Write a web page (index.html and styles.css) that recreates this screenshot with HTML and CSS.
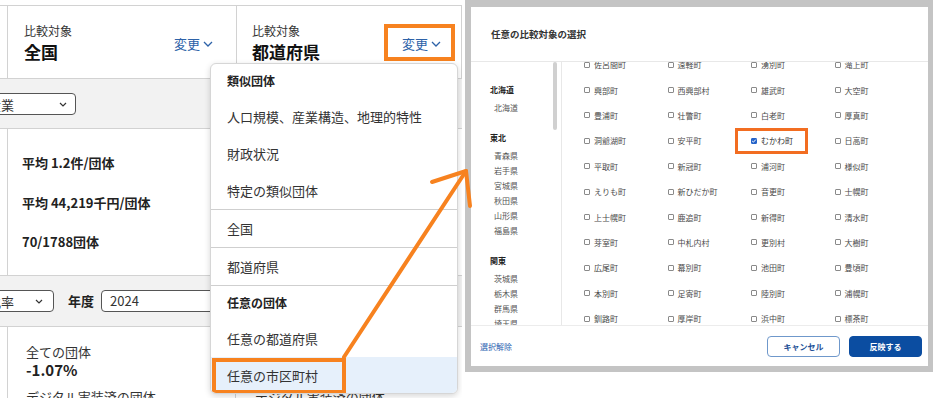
FILE: index.html
```html
<!DOCTYPE html>
<html lang="ja">
<head>
<meta charset="utf-8">
<link rel="stylesheet" href="styles.css">
</head>
<body>
<div class="canvas">
  <section class="dash">
    <div class="cards top">
      <div class="lead"></div>
      <div class="card c1">
        <div class="card-text">
          <div class="label">比較対象</div>
          <div class="value">全国</div>
        </div>
        <a class="change">変更<svg width="10" height="6" viewBox="0 0 10 6"><path d="M1 1l4 4 4-4" fill="none" stroke="#2d62a8" stroke-width="1.3"/></svg></a>
      </div>
      <div class="card c2">
        <div class="card-text">
          <div class="label">比較対象</div>
          <div class="value">都道府県</div>
        </div>
        <a class="change">変更<svg width="10" height="6" viewBox="0 0 10 6"><path d="M1 1l4 4 4-4" fill="none" stroke="#2d62a8" stroke-width="1.3"/></svg><span class="mark mark-change"></span></a>
      </div>
    </div>
    <div class="band band1">
      <div class="select s1"><span>産業</span><svg width="8" height="5" viewBox="0 0 8 5"><path d="M1 1l3 3 3-3" fill="none" stroke="#333" stroke-width="1.2"/></svg></div>
    </div>
    <div class="stats">
      <p>平均 1.2件/団体</p>
      <p>平均 44,219千円/団体</p>
      <p>70/1788団体</p>
    </div>
    <div class="band band2">
      <div class="select s2"><span>比率</span><svg width="8" height="5" viewBox="0 0 8 5"><path d="M1 1l3 3 3-3" fill="none" stroke="#333" stroke-width="1.2"/></svg></div>
      <span class="year-label">年度</span>
      <div class="input">2024</div>
    </div>
    <div class="cards bottom">
      <div class="lead"></div>
      <div class="card b1">
        <div class="blabel">全ての団体</div>
        <div class="bvalue">-1.07%</div>
        <div class="blabel next">デジタル実装済の団体</div>
      </div>
      <div class="card b2">
        <div class="blabel">デジタル実装済の団体</div>
      </div>
    </div>
    <div class="menu">
      <div class="menu-head">類似団体</div>
      <div class="menu-item">人口規模、産業構造、地理的特性</div>
      <div class="menu-item">財政状況</div>
      <div class="menu-item">特定の類似団体</div>
      <div class="menu-sep"></div>
      <div class="menu-item">全国</div>
      <div class="menu-sep"></div>
      <div class="menu-item">都道府県</div>
      <div class="menu-sep"></div>
      <div class="menu-head">任意の団体</div>
      <div class="menu-item">任意の都道府県</div>
      <div class="menu-item active">任意の市区町村<span class="mark mark-item"></span></div>
    </div>
  </section>

  <section class="modal">
    <div class="modal-head">任意の比較対象の選択</div>
    <div class="modal-body">
      <div class="side">
        <div class="thumb"></div>
        <div class="group">
          <div class="ghead">北海道</div>
          <div class="gitem">北海道</div>
        </div>
        <div class="group">
          <div class="ghead">東北</div>
          <div class="gitem">青森県</div>
          <div class="gitem">岩手県</div>
          <div class="gitem">宮城県</div>
          <div class="gitem">秋田県</div>
          <div class="gitem">山形県</div>
          <div class="gitem">福島県</div>
        </div>
        <div class="group">
          <div class="ghead">関東</div>
          <div class="gitem">茨城県</div>
          <div class="gitem">栃木県</div>
          <div class="gitem">群馬県</div>
          <div class="gitem">埼玉県</div>
        </div>
      </div>
      <div class="grid-wrap">
        <div class="grid">
          <div class="cell"><i class="cb"></i>佐呂間町</div>
          <div class="cell"><i class="cb"></i>遠軽町</div>
          <div class="cell"><i class="cb"></i>湧別町</div>
          <div class="cell"><i class="cb"></i>滝上町</div>
          <div class="cell"><i class="cb"></i>興部町</div>
          <div class="cell"><i class="cb"></i>西興部村</div>
          <div class="cell"><i class="cb"></i>雄武町</div>
          <div class="cell"><i class="cb"></i>大空町</div>
          <div class="cell"><i class="cb"></i>豊浦町</div>
          <div class="cell"><i class="cb"></i>壮瞥町</div>
          <div class="cell"><i class="cb"></i>白老町</div>
          <div class="cell"><i class="cb"></i>厚真町</div>
          <div class="cell"><i class="cb"></i>洞爺湖町</div>
          <div class="cell"><i class="cb"></i>安平町</div>
          <div class="cell picked"><i class="cb on"><svg width="6" height="6" viewBox="0 0 6 6"><path d="M1.2 3l1.2 1.2L4.8 1.6" fill="none" stroke="#fff" stroke-width="1"/></svg></i>むかわ町<span class="mark mark-cell"></span></div>
          <div class="cell"><i class="cb"></i>日高町</div>
          <div class="cell"><i class="cb"></i>平取町</div>
          <div class="cell"><i class="cb"></i>新冠町</div>
          <div class="cell"><i class="cb"></i>浦河町</div>
          <div class="cell"><i class="cb"></i>様似町</div>
          <div class="cell"><i class="cb"></i>えりも町</div>
          <div class="cell"><i class="cb"></i>新ひだか町</div>
          <div class="cell"><i class="cb"></i>音更町</div>
          <div class="cell"><i class="cb"></i>士幌町</div>
          <div class="cell"><i class="cb"></i>上士幌町</div>
          <div class="cell"><i class="cb"></i>鹿追町</div>
          <div class="cell"><i class="cb"></i>新得町</div>
          <div class="cell"><i class="cb"></i>清水町</div>
          <div class="cell"><i class="cb"></i>芽室町</div>
          <div class="cell"><i class="cb"></i>中札内村</div>
          <div class="cell"><i class="cb"></i>更別村</div>
          <div class="cell"><i class="cb"></i>大樹町</div>
          <div class="cell"><i class="cb"></i>広尾町</div>
          <div class="cell"><i class="cb"></i>幕別町</div>
          <div class="cell"><i class="cb"></i>池田町</div>
          <div class="cell"><i class="cb"></i>豊頃町</div>
          <div class="cell"><i class="cb"></i>本別町</div>
          <div class="cell"><i class="cb"></i>足寄町</div>
          <div class="cell"><i class="cb"></i>陸別町</div>
          <div class="cell"><i class="cb"></i>浦幌町</div>
          <div class="cell"><i class="cb"></i>釧路町</div>
          <div class="cell"><i class="cb"></i>厚岸町</div>
          <div class="cell"><i class="cb"></i>浜中町</div>
          <div class="cell"><i class="cb"></i>標茶町</div>
        </div>
      </div>
    </div>
    <div class="modal-foot">
      <a class="clear">選択解除</a>
      <button class="btn ghost">キャンセル</button>
      <button class="btn solid">反映する</button>
    </div>
  </section>

  <svg class="arrow" width="938" height="398" viewBox="0 0 938 398">
    <g fill="none" stroke="#f7821f" stroke-width="4" stroke-linecap="round" stroke-linejoin="round">
      <path d="M344 357L466 171"/>
      <path d="M432 182L466 171L470 206"/>
    </g>
  </svg>
</div>
</body>
</html>
```

FILE: styles.css
```css
* { box-sizing: border-box; }
html, body { margin: 0; padding: 0; background: #fff; }
body {
  font-family: "Noto Sans CJK JP", "Noto Sans", sans-serif;
  color: #333;
}
.canvas {
  position: relative;
  width: 938px;
  height: 398px;
  display: flex;
  align-items: flex-start;
  overflow: hidden;
}

/* ---------- left dashboard ---------- */
.dash {
  position: relative;
  width: 462px;
  height: 398px;
  padding-top: 5px;
  overflow: hidden;
  flex: none;
}
.cards { display: flex; }
.cards.top {
  height: 73px;
  border-top: 1px solid #d2d2d2;
}
.lead { width: 7px; flex: none; }
.card {
  border-left: 1px solid #d2d2d2;
  display: flex;
  align-items: flex-start;
}
.c1 { width: 229px; padding: 17px 23px 0 16px; }
.c2 { width: 226px; padding: 17px 20px 0 15px; border-right: 1px solid #d2d2d2; }
.card-text { flex: 1; }
.label { font-size: 12px; line-height: 16px; color: #333; }
.value { font-size: 17px; line-height: 22px; font-weight: 700; margin-top: 2px; color: #111; }
.change {
  position: relative;
  margin-top: 12px;
  font-size: 13px;
  line-height: 18px;
  color: #2d62a8;
  display: flex;
  align-items: center;
  gap: 3px;
}
.mark {
  position: absolute;
  border: 4px solid #f7821f;
  pointer-events: none;
}
.mark-change { left: -18px; top: -11px; width: 71px; height: 37px; }

.band {
  background: #f2f2f2;
  border-top: 1px solid #d2d2d2;
  border-bottom: 1px solid #d2d2d2;
  display: flex;
  align-items: flex-start;
}
.band1 { height: 51px; padding-top: 14px; }
.band2 { height: 52px; padding-top: 14px; }
.select {
  height: 22px;
  background: #fff;
  border: 1px solid #555;
  border-radius: 4px;
  display: flex;
  align-items: center;
  justify-content: space-between;
  font-size: 13px;
  color: #333;
}
.s1 { width: 100px; margin-left: -24px; padding: 0 8px 0 11px; }
.s2 { width: 76px; margin-left: -22px; padding: 0 10px 0 9px; }
.year-label {
  font-size: 13px;
  font-weight: 700;
  line-height: 22px;
  margin-left: 14px;
  color: #222;
}
.input {
  margin-left: 7px;
  width: 220px;
  height: 22px;
  background: #fff;
  border: 1px solid #555;
  border-radius: 4px;
  font-size: 13px;
  line-height: 20px;
  padding-left: 8px;
  color: #333;
}
.stats {
  height: 146px;
  margin-left: 7px;
  border-left: 1px solid #d2d2d2;
  padding: 24px 0 0 14px;
  display: flex;
  flex-direction: column;
  gap: 19.5px;
}
.stats p {
  margin: 0;
  font-size: 13px;
  line-height: 20px;
  font-weight: 700;
  color: #222;
}
.cards.bottom { height: 80px; }
.b1 { width: 228px; flex-direction: column; padding: 16px 0 0 18px; }
.b2 { width: 227px; flex-direction: column; padding: 61px 0 0 19px; }
.blabel { font-size: 13px; line-height: 18px; color: #333; white-space: nowrap; }
.bvalue { font-size: 15px; line-height: 18px; font-weight: 700; color: #222; }
.blabel.next { margin-top: 9px; }

/* dropdown menu */
.menu {
  position: absolute;
  left: 210px;
  top: 63px;
  width: 248px;
  height: 331px;
  background: #fff;
  border: 1px solid #d6d6d6;
  border-radius: 6px;
  box-shadow: 0 2px 6px rgba(0,0,0,0.16);
  overflow: hidden;
}
.menu-head {
  height: 34px;
  line-height: 34px;
  padding-left: 16px;
  font-size: 12px;
  font-weight: 700;
  color: #222;
}
.menu-item {
  position: relative;
  height: 37px;
  line-height: 37px;
  padding-left: 16px;
  font-size: 13px;
  color: #333;
}
.menu-sep { height: 1px; background: #cfcfcf; }
.menu-item.active { background: #e6f0fb; }
.mark-item { left: 1px; top: 1px; width: 134px; height: 36px; }

/* ---------- modal screenshot ---------- */
.modal {
  flex: none;
  margin-left: 3px;
  width: 468px;
  height: 372px;
  border-style: solid;
  border-color: #c4c4c4;
  border-width: 7px 5px 6px 6px;
  background: #fff;
  display: flex;
  flex-direction: column;
}
.modal-head {
  height: 55px;
  flex: none;
  border-bottom: 1px solid #e8e8e8;
  padding-left: 20px;
  display: flex;
  align-items: center;
  font-size: 9.5px;
  font-weight: 700;
  color: #333;
}
.modal-body {
  height: 263px;
  flex: none;
  display: flex;
}
.side {
  position: relative;
  width: 91px;
  flex: none;
  border-right: 1px solid #e8e8e8;
  padding: 20px 0 0 19px;
  overflow: hidden;
}
.thumb {
  position: absolute;
  right: 4px;
  top: 0;
  width: 4px;
  height: 68px;
  border-radius: 2px;
  background: #d0d0d0;
}
.group { margin-bottom: 15px; }
.ghead { font-size: 8px; line-height: 15px; font-weight: 700; color: #222; }
.gitem { font-size: 8px; line-height: 15px; color: #555; padding-left: 4px; }
.ghead + .gitem { margin-top: 3px; }
.grid-wrap {
  flex: 1;
  overflow: hidden;
}
.grid {
  margin-top: -10px;
  padding-left: 22px;
  display: grid;
  grid-template-columns: repeat(4, 83.5px);
  grid-auto-rows: 25.4px;
}
.cell {
  position: relative;
  display: flex;
  align-items: center;
  gap: 4px;
  font-size: 8px;
  color: #4a4a4a;
  white-space: nowrap;
}
.cb {
  width: 6px;
  height: 6px;
  flex: none;
  border: 1px solid #8a8a8a;
  border-radius: 1px;
  background: #fff;
  display: flex;
}
.cb.on { background: #2463c9; border-color: #2463c9; }
.cb svg { display: block; margin: -1px; }
.picked { color: #333; }
.mark-cell {
  left: -16px;
  top: -0.5px;
  width: 73px;
  height: 26px;
  border-width: 3px;
  border-color: #f26d21;
}
.modal-foot {
  flex: 1;
  border-top: 1px solid #ececec;
  display: flex;
  align-items: center;
  padding: 0 6px 0 9px;
  gap: 9px;
}
.clear {
  font-size: 8px;
  color: #2b62b0;
  margin-right: auto;
}
.btn {
  width: 73px;
  height: 21px;
  border-radius: 4px;
  font-family: inherit;
  font-size: 8px;
  font-weight: 700;
  padding: 0;
  margin: 0;
}
.ghost { background: #fff; border: 1px solid #6f98cb; color: #1d4f96; }
.solid { background: #0b4da1; border: 1px solid #0b4da1; color: #fff; }

.arrow {
  position: absolute;
  left: 0;
  top: 0;
  pointer-events: none;
}
```
